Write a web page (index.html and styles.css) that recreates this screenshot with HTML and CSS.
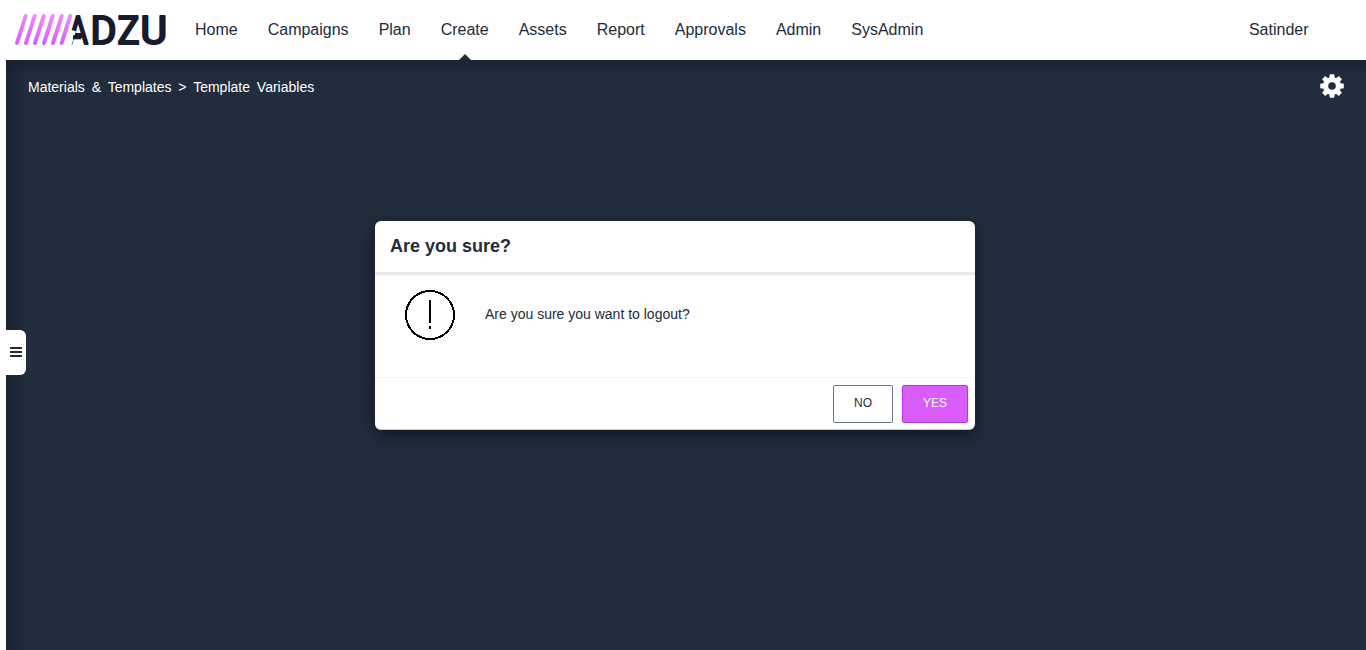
FILE: index.html
```html
<!DOCTYPE html>
<html lang="en">
<head>
<meta charset="utf-8">
<title>ADZU - Template Variables</title>
<link rel="stylesheet" href="styles.css">
</head>
<body>
<header class="topbar">
  <svg class="logo" width="156" height="60" viewBox="12 0 156 60" role="img" aria-label="ADZU">
    <defs>
      <linearGradient id="slash" gradientUnits="userSpaceOnUse" x1="0" y1="15" x2="0" y2="45">
        <stop offset="0" stop-color="#f08cfa"/><stop offset="1" stop-color="#d75cfb"/>
      </linearGradient>
    </defs>
    <g class="wordmark">
      <text x="68" y="43.5" textLength="20" lengthAdjust="spacingAndGlyphs">A</text>
      <text x="90.4" y="43.5" textLength="26" lengthAdjust="spacingAndGlyphs">D</text>
      <text x="117.4" y="43.5" textLength="22" lengthAdjust="spacingAndGlyphs">Z</text>
      <text x="140.6" y="43.5" textLength="26.5" lengthAdjust="spacingAndGlyphs">U</text>
    </g>
    <path class="gap" d="M66 48L71.5 30"/>
    <path class="crossbar" d="M73 37.3H81"/>
    <path class="slashes" d="M17 43L25.7 16M26 43L34.7 16M35 43L43.7 16M44 43L52.7 16M53 43L61.7 16M61.7 43L70.2 16"/>
  </svg>
  <nav class="nav">
    <a>Home</a><a>Campaigns</a><a>Plan</a><a class="active">Create</a><a>Assets</a><a>Report</a><a>Approvals</a><a>Admin</a><a>SysAdmin</a>
  </nav>
  <span class="user">Satinder</span>
</header>
<main class="workspace">
  <div class="crumbbar">
    <span class="crumbs">Materials &amp; Templates &gt; Template Variables</span>
    <svg class="gear" width="24" height="24" viewBox="-12 -12 24 24">
      <g fill="#fff">
        <path id="tooth" d="M-2.7-8L-2.2-11.8H2.2L2.7-8V8L2.2 11.8H-2.2L-2.7 8Z"/>
        <use href="#tooth" transform="rotate(45)"/><use href="#tooth" transform="rotate(90)"/><use href="#tooth" transform="rotate(135)"/>
        <circle r="9"/>
      </g>
      <circle r="3.8" fill="#212c3d"/>
    </svg>
  </div>
  <button class="drawer" aria-label="Menu"><i></i><i></i><i></i></button>
  <section class="dialog">
    <h2>Are you sure?</h2>
    <div class="content">
      <svg width="50" height="50" viewBox="0 0 50 50" shape-rendering="crispEdges">
        <circle cx="25" cy="25" r="24" fill="none" stroke="#000" stroke-width="2"/>
        <path d="M24 10h2v23h-2zM24 36h2v3h-2z"/>
      </svg>
      <p>Are you sure you want to logout?</p>
    </div>
    <footer><button class="no">NO</button><button class="yes">YES</button></footer>
  </section>
</main>
</body>
</html>
```
FILE: styles.css
```css
* { box-sizing: border-box; }
body { margin: 0; height: 650px; overflow: hidden; background: #fff; color: #212c3d; font-family: "Liberation Sans", Arial, sans-serif; }
.topbar { height: 60px; display: flex; align-items: center; padding: 0 57.5px 0 12px; font-size: 16px; }
.logo { display: block; overflow: visible; }
.wordmark { font: 400 38px Roboto, sans-serif; fill: #171b30; stroke: #171b30; stroke-width: 2.2; stroke-linejoin: round; }
.gap { stroke: #fff; stroke-width: 9; }
.crossbar { stroke: #171b30; stroke-width: 4; }
.slashes { fill: none; stroke: url(#slash); stroke-width: 4; stroke-linecap: round; }
.nav { display: flex; gap: 30px; margin-left: 27px; }
.nav a { line-height: 60px; }
.active { position: relative; }
.active::after { content: ""; position: absolute; bottom: 0; left: calc(50% - 6px); border: 6px solid transparent; border-top: 0; border-bottom-color: #212c3d; }
.user { margin-left: auto; }
.workspace { position: relative; height: 590px; margin-left: 6px; background: linear-gradient(90deg, rgba(23,30,45,.65), transparent 22px), linear-gradient(#1b2334, transparent 16px), #212c3d; }
.crumbbar { display: flex; justify-content: space-between; align-items: center; height: 54px; padding: 0 22px; }
.crumbs { color: #fff; font-size: 14px; word-spacing: 3px; }
.gear { margin-top: -2px; }
.drawer { position: absolute; left: 0; top: 270px; width: 20px; height: 45px; padding: 0 4px 2px; border: 0; border-radius: 0 6px 6px 0; background: #fff; display: flex; flex-direction: column; justify-content: center; gap: 2px; }
.drawer i { height: 2px; background: #212c3d; }
.dialog { position: absolute; left: 369px; top: 161px; width: 600px; height: 209px; background: #fff; border-radius: 6px; border-bottom: 1px solid #c8c9cc; box-shadow: 0 5px 15px rgba(0,0,0,.5); }
.dialog h2 { margin: 0; height: 54px; padding: 0 15px; border-bottom: 3px solid #e9e9e9; font-size: 18px; line-height: 51px; }
.content { display: flex; height: 102px; padding: 15px 30px; gap: 30px; }
.content p { margin: 0; font-size: 14px; line-height: 48px; }
.dialog footer { display: flex; justify-content: flex-end; gap: 9px; padding: 7px 7px 0; border-top: 1px solid #f6f6f6; }
.dialog footer button { height: 38px; padding: 0 0 3px; border-radius: 2px; font: 12px "Liberation Sans", Arial, sans-serif; }
.no { width: 60px; background: #fff; color: #212c3d; border: 1px solid #697584; }
.yes { width: 66px; background: #da5cfb; color: #fff; border: 1px solid #bd32e5; }
```
